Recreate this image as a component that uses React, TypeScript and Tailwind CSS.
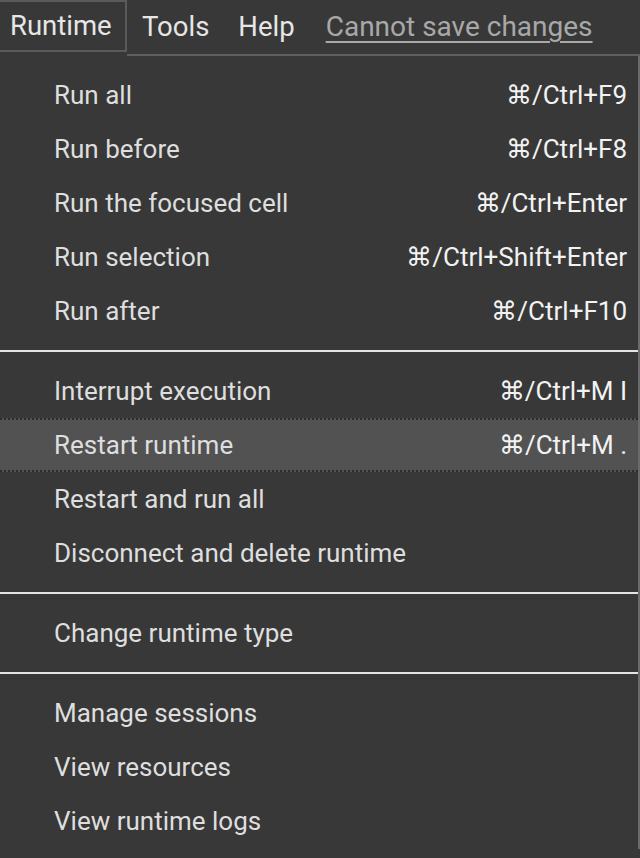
import React from 'react'

type Item = { label: string; shortcut?: string; active?: boolean }

const GROUPS: Item[][] = [
  [
    { label: 'Run all', shortcut: '⌘/Ctrl+F9' },
    { label: 'Run before', shortcut: '⌘/Ctrl+F8' },
    { label: 'Run the focused cell', shortcut: '⌘/Ctrl+Enter' },
    { label: 'Run selection', shortcut: '⌘/Ctrl+Shift+Enter' },
    { label: 'Run after', shortcut: '⌘/Ctrl+F10' },
  ],
  [
    { label: 'Interrupt execution', shortcut: '⌘/Ctrl+M I' },
    { label: 'Restart runtime', shortcut: '⌘/Ctrl+M .', active: true },
    { label: 'Restart and run all' },
    { label: 'Disconnect and delete runtime' },
  ],
  [{ label: 'Change runtime type' }],
  [
    { label: 'Manage sessions' },
    { label: 'View resources' },
    { label: 'View runtime logs' },
  ],
]

function MenuRow({ item }: { item: Item }) {
  return (
    <div
      className={
        item.active
          ? 'flex h-[54px] items-center justify-between border-y-2 border-dotted border-[#2c2c2c] bg-[#525252] pl-[54px] pr-[11px]'
          : 'flex h-[54px] items-center justify-between pl-[54px] pr-[11px]'
      }
    >
      <span className="text-[#dedede]">{item.label}</span>
      {item.shortcut && <span className="text-[#f2f2f2]">{item.shortcut}</span>}
    </div>
  )
}

export default function App() {
  return (
    <div className="h-[858px] w-[640px] overflow-hidden bg-[#383838] font-['Roboto','Liberation_Sans',sans-serif]">
      <div className="flex h-[56px] items-end">
        <div className="flex h-[52px] w-[127px] items-center self-start border-t-2 border-r-2 border-b-2 border-[#5a5a5a] pl-[10px] text-[27.5px] text-[#e6e6e6]">
          Runtime
        </div>
        <div className="flex h-[56px] flex-1 items-center border-b-2 border-[#5f5f5f] pl-[15px] text-[27.5px] text-[#e6e6e6]">
          <span>Tools</span>
          <span className="ml-[29px]">Help</span>
          <span className="ml-[31px] text-[28px] text-[#a8a8a8] underline underline-offset-[5px]">
            Cannot save changes
          </span>
        </div>
      </div>
      <div className="border-r-2 border-[#6a6a6a] pt-[12px] pb-[1px] text-[26px]">
        {GROUPS.map((group, gi) => (
          <div key={gi}>
            {gi > 0 && <div className="my-[12px] h-[2px] bg-[#e4e4e4]" />}
            {group.map((item) => (
              <MenuRow key={item.label} item={item} />
            ))}
          </div>
        ))}
      </div>
    </div>
  )
}
